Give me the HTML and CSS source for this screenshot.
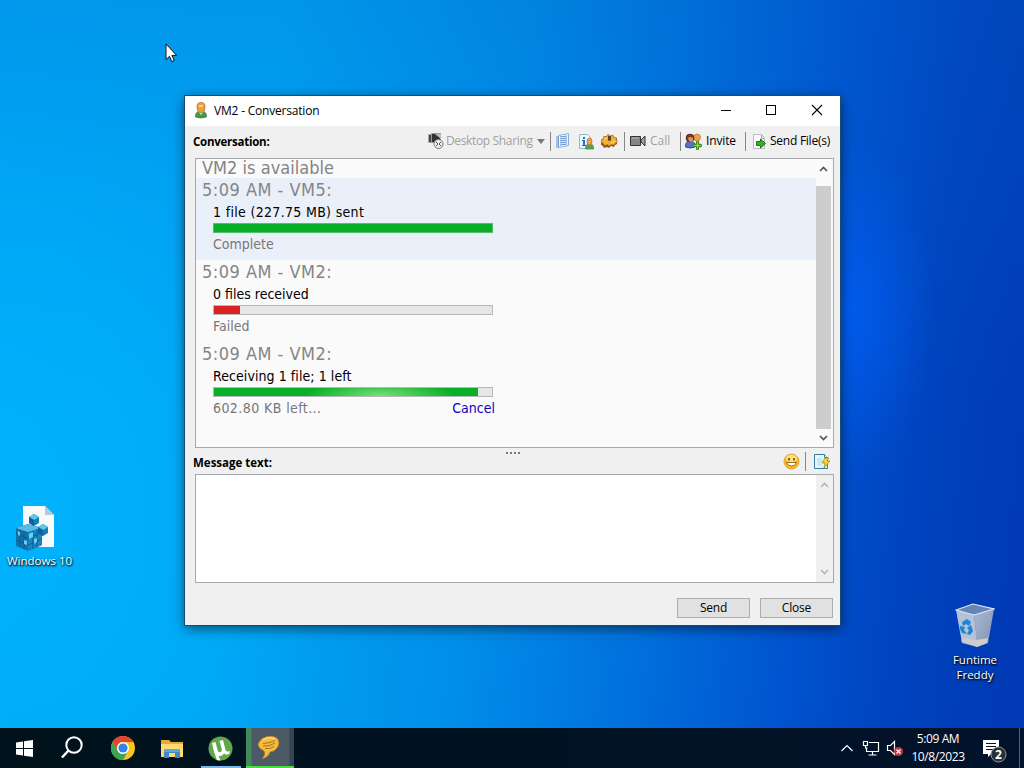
FILE: index.html
```html
<!DOCTYPE html>
<html lang="en">
<head>
<meta charset="utf-8">
<title>VM2 - Conversation</title>
<link rel="stylesheet" href="styles.css">
</head>
<body>
<main class="desktop">
  <svg class="cursor" width="13" height="20" viewBox="0 0 13 20"><path d="M1 1v15.500l3.500-3.200 2.300 5.300 2.400-1-2.300-5.200h4.800z" fill="#fff" stroke="#111"/></svg>

  <div class="shortcut shortcut-reg">
    <svg width="42" height="46" viewBox="0 0 42 46">
      <path d="M8 1h22l9 9v32H8z" fill="#f7f9fb"/><path d="M30 1l9 9h-9z" fill="#b9c9d4"/>
      <path d="M1 23l12-4 14 4v17l-14 6-12-5z" fill="#1173ae"/>
      <path d="M1 23l12-4 14 4-14 4z" fill="#58bbe5"/>
      <path d="M13 27v19l14-6V23z" fill="#1787c4"/>
      <path d="M5 25v17M9 26v18M1 29l12 4 14-5M1 35l12 5 14-6M18 26v18M22 24v18" stroke="#0b5588" fill="none" stroke-width=".8"/>
      <path d="M14 29l4-2v5l-4 2zM19 34l3-1v4l-3 2zM3 26l2 1v4l-2-1zM9 35l3 1v4l-3-1z" fill="#70cbec"/>
      <path d="M14 12l5-3 5 3v6l-5 3-5-3z" fill="#167db7"/><path d="M14 12l5-3 5 3-5 3z" fill="#65c5e8"/><path d="M19 15v6l-5-3v-6z" fill="#0c649c"/>
      <path d="M23 22l5-3 5 3v6l-5 3-5-3z" fill="#167db7"/><path d="M23 22l5-3 5 3-5 3z" fill="#65c5e8"/><path d="M28 25v6l-5-3v-6z" fill="#0c649c"/>
    </svg>
    <span class="reg-label">Windows 10</span>
  </div>

  <div class="shortcut shortcut-bin">
    <svg width="40" height="46" viewBox="0 0 40 46">
      <defs><linearGradient id="bin" x2="1" y2="1"><stop stop-color="#a9b9d4"/><stop offset="1" stop-color="#8291b1"/></linearGradient></defs>
      <path d="M1 7l18 4 4 33-16-4z" fill="#b4c1d8"/><path d="M19 11l20-5-6 34-11 4z" fill="url(#bin)"/>
      <path d="M1 7l17-6 21 5-20 6z" fill="#6684b4" stroke="#dce9fa" stroke-width="1.2"/>
      <path d="M6 38l2-3 13 2 12-2-1 5-10 4z" fill="#d0cbcd"/>
      <g fill="#1688d4"><path d="M7 19l5-3 4 3-2 4-3-2-3 2z"/><path d="M16 22l2 6-3 4-3-1 2-4-2-2z"/><path d="M5 23l5 1-1 3 3 4-5-1-2-4z"/></g>
    </svg>
    <span>Funtime</span><span>Freddy</span>
  </div>

  <section class="window">
    <header class="titlebar">
      <svg class="person" width="14" height="17" viewBox="0 0 14 17"><path d="M1.500 15c0-5 2-5.500 5.500-5.500s5.500.5 5.500 5.500q-5.500 2-11 0" fill="#3b9d49" stroke="#4d6d43" stroke-width=".7"/><path d="M4.500 10l2.500 3 2.500-3" fill="#e9f4df"/><path d="M3 4c0-5 8-5 8 0 0 4-1 7-4 7S3 8 3 4" fill="#e9a03d" stroke="#a96a2b" stroke-width=".7"/><path d="M5 4h4" stroke="#ffd17b" stroke-width="2"/></svg>
      <h1>VM2 - Conversation</h1>
      <svg class="controls" width="138" height="30" viewBox="0 0 138 30" fill="none" stroke="#000" shape-rendering="crispEdges"><path d="M19 14.500h10M64.500 9.500h9v9h-9z"/><path d="M110 9l10 10M120 9l-10 10" shape-rendering="auto" stroke-width="1.1"/></svg>
    </header>

    <div class="toolbar">
      <strong class="conv">Conversation:</strong>
      <svg class="ic-share" width="17" height="18" viewBox="0 0 17 18"><path d="M1.500 2.500h4v8h-4z" fill="#444" stroke="#aaa"/><path d="M4.500 1.500h9v9h-9z" fill="#333" stroke="#999"/><path d="M8 2h6v5z" fill="#bbb"/><circle cx="11.500" cy="12" r="4.500" fill="#eee" stroke="#777"/><path d="M9 10l2 2-2 2M14 10l-2 2 2 2" stroke="#555" fill="none"/></svg>
      <span class="off share-label">Desktop Sharing</span>
      <svg class="arrow" width="8" height="5" viewBox="0 0 8 5"><path d="M0 0h8L4 5z" fill="#777"/></svg>
      <i class="sep sep1"></i>
      <svg class="ic-notes" width="14" height="16" viewBox="0 0 14 16"><path d="M2.500 2.500l10-2v12l-10 2z" fill="#eef5ff" stroke="#8dadd8"/><path d="M4 4l7-1M4 6l7-1M4 8l7-1M4 10l7-1M4 12l7-1" stroke="#5f90d0"/><path d="M0 4h3M0 6h3M0 8h3M0 10h3M0 12h3M0 14h3" stroke="#6c91c8"/></svg>
      <svg class="ic-info" width="16" height="17" viewBox="0 0 16 17"><path d="M1.500 1.500h8l3 3v11h-11z" fill="#edf8ff" stroke="#94b7d0"/><path d="M5 4h2v2H5zM4 7h3v5h1v1H4v-1h1V8H4z" fill="#1f70c4"/><path d="M7.500 16c0-4 1-5 4-5s4 1 4 5z" fill="#49a959" stroke="#52743f" stroke-width=".7"/><ellipse cx="11.500" cy="8.500" rx="2.500" ry="3.500" fill="#eba34b" stroke="#b56a2d" stroke-width=".7"/></svg>
      <svg class="ic-gear" width="17" height="17" viewBox="0 0 17 17"><path d="M1 6l2-1V3h3l1-2 2 2 3-1 1 2 3 1v6l-2 1-1 2-3-1-2 2-2-1-3 1-1-2-3-2z" fill="#8b541a"/><path d="M.5 6.500l2-.5V3.500h3L7 1.500 9 3l2.500-1 1 2 3 1-.5 2 1.500 1.500-2.500 2-1 1.500-3-.5-1.500 1.500-2-1.500-3 1-1-2-2-1z" fill="#ecb137" stroke="#b77719" stroke-width=".7"/><path d="M7 3h3v4q-2 2-3 0z" fill="#61401b"/><path d="M3 6l3-1M10 10l4-2" stroke="#ffe277"/></svg>
      <i class="sep sep2"></i>
      <svg class="ic-call" width="17" height="12" viewBox="0 0 17 12"><path d="M.5 1.500h10v9H.5z" fill="#858585" stroke="#333"/><path d="M11 5l4-4v10l-4-4z" fill="#a2a2a2" stroke="#333"/><path d="M2 3h7" stroke="#bbb"/></svg>
      <span class="off call-label">Call</span>
      <i class="sep sep3"></i>
      <svg class="ic-invite" width="17" height="17" viewBox="0 0 17 17"><circle cx="12" cy="4.500" r="3.500" fill="#eca345" stroke="#b87032" stroke-width=".7"/><path d="M8 13c0-4 7-6 8-1v3z" fill="#efb75c"/><path d="M.5 14c0-5 2-6 4.500-6s5 1 5 6q-5 2-9.500 0" fill="#5275c8" stroke="#324991"/><circle cx="5" cy="5" r="4" fill="#7c392c" stroke="#552217" stroke-width=".7"/><path d="M3 5q2-2 5 0v3q-2 2-4 0z" fill="#d99364"/><path d="M11.500 8.500h2v3h3v2h-3v3h-2v-3h-3v-2h3z" fill="#8cdd35" stroke="#398821"/></svg>
      <span class="invite-label">Invite</span>
      <i class="sep sep4"></i>
      <svg class="ic-send" width="15" height="17" viewBox="0 0 15 17"><path d="M1.500 1.500h8l3 3v11h-11z" fill="#fafafa" stroke="#bbb"/><path d="M9.500 1.500v4h3" stroke="#aaa" fill="#ddd"/><path d="M4.500 8.500h4V6l5 4.500-5 4.500v-2.500h-4z" fill="#3eac31" stroke="#18741b"/></svg>
      <span class="send-label">Send File(s)</span>
    </div>

    <div class="chat">
      <div class="log">
        <p class="presence">VM2 is available</p>
        <article class="message own">
          <h2>5:09 AM - VM5:</h2><p class="file sent">1 file (227.75 MB) sent</p>
          <div class="bar done"><div class="fill full"></div></div><div class="status"><span>Complete</span></div>
        </article>
        <article class="message">
          <h2>5:09 AM - VM2:</h2><p class="file">0 files received</p>
          <div class="bar"><div class="fill failed"></div></div><div class="status"><span>Failed</span></div>
        </article>
        <article class="message">
          <h2>5:09 AM - VM2:</h2><p class="file receiving">Receiving 1 file; 1 left</p>
          <div class="bar"><div class="fill active"></div></div><div class="status"><span class="remain">602.80 KB left...</span><a>Cancel</a></div>
        </article>
      </div>
      <div class="scroll">
        <svg width="9" height="6" viewBox="0 0 9 6"><path d="M1 5l3.500-3.500L8 5"/></svg>
        <div class="thumb"></div>
        <svg width="9" height="6" viewBox="0 0 9 6"><path d="M1 1l3.500 3.500L8 1"/></svg>
      </div>
    </div>

    <div class="compose-head">
      <strong>Message text:</strong>
      <svg class="dots" width="14" height="2" viewBox="0 0 14 2"><path d="M0 1h14" stroke="#777" stroke-width="2" stroke-dasharray="2"/></svg>
      <svg class="smile" width="17" height="17" viewBox="0 0 17 17"><circle cx="8.500" cy="8.500" r="7.500" fill="#f6b91f" stroke="#d99526" stroke-width=".8"/><ellipse cx="8.500" cy="5.500" rx="5.500" ry="3.800" fill="#ffe275"/><path d="M6 5v2.500M11 5v2.500" stroke="#5c3e16" stroke-width="1.5"/><path d="M3.500 9.500h10q-1 3.500-5 3.500t-5-3.500" fill="#fff" stroke="#8d601c" stroke-width=".9"/></svg>
      <i class="sep head-sep"></i>
      <svg class="template" width="18" height="17" viewBox="0 0 18 17"><path d="M1.500 1.500h10l3 3v11h-13z" fill="#e1f7fb" stroke="#327e9e"/><path d="M11.500 1.500v3h3" fill="#fff" stroke="#327e9e"/><path d="M4 6h5M4 8h5M4 10h4M4 12h5" stroke="#acd8df"/><path d="M12 5h4l-2 3h3l-6 7 1-5H9z" fill="#f4d337" stroke="#a28a25" stroke-width=".8"/></svg>
    </div>
    <div class="compose"><div class="scroll light"><svg width="9" height="6" viewBox="0 0 9 6"><path d="M1 5l3.500-3.500L8 5"/></svg><svg width="9" height="6" viewBox="0 0 9 6"><path d="M1 1l3.500 3.500L8 1"/></svg></div></div>
    <footer><button>Send</button><button>Close</button></footer>
  </section>
</main>

<nav class="taskbar">
  <div class="task"><svg width="17" height="17" viewBox="0 0 17 17" fill="#fff"><path d="M0 2.500l7-1V8H0zM8 1.300L17 0v8H8zM0 9h7v6.500l-7-1zM8 9h9v8l-9-1.300z"/></svg></div>
  <div class="task search"><svg width="24" height="24" viewBox="0 0 24 24" fill="none" stroke="#fff" stroke-width="2"><circle cx="14" cy="9" r="7.700"/><path d="M8.500 14.500L2 21.500" stroke-width="2.500"/></svg></div>
  <div class="task"><svg width="24" height="24" viewBox="0 0 24 24"><circle cx="12" cy="12" r="12" fill="#f9c51f"/><path d="M1.600 6A12 12 0 0 1 22.400 6H12a6 6 0 0 0-5.200 9z" fill="#e44332"/><path d="M1.600 6l5.200 9a6 6 0 0 0 10.400 0L12 24A12 12 0 0 1 1.600 6" fill="#38a455"/><circle cx="12" cy="12" r="6" fill="#fff"/><circle cx="12" cy="12" r="4.600" fill="#3483e8"/></svg></div>
  <div class="task"><svg width="22" height="19" viewBox="0 0 22 19"><path d="M0 1h8l2 2h12v15H0z" fill="#e9a932"/><path d="M0 5h22v13H0z" fill="#ffda73"/><path d="M3 19v-9h16v9h-5v-5H8v5z" fill="#3c8ac7"/><path d="M3 10h16v3H3z" fill="#61a8d7"/></svg></div>
  <div class="task running"><svg width="25" height="25" viewBox="0 0 25 25"><circle cx="12.500" cy="12.500" r="12" fill="#64a64b"/><path d="M4 7l3.500-1 2 8q1 3 3 2t1-4l-2-7 3.500-1 2.500 10q.7 2 3 1.500l1.500-.5-1 3q-3 1.500-5-.5-1.500 3-5.500 2.500l2 4.500-3.500-.3Q5.500 16 4 7z" fill="#fff"/></svg></div>
  <div class="task selected"><svg width="24" height="24" viewBox="0 0 24 24"><path d="M5 2.500Q14-2 20 2q4 5 0 10-3 4-7 4-1 5-8 7 4-4 2-8Q-1 11 2 6z" fill="#f4bb3f" stroke="#a97020" stroke-width=".7"/><path d="M6 7.500q6 0 12-3M6 10q6 1 12-3M8 12.500q5 1 9-2" stroke="#a9701e" fill="none"/><path d="M6 4q6-4 12-1" stroke="#ffe897" fill="none"/></svg></div>
  <div class="tray">
    <svg width="64" height="20" viewBox="0 0 64 20" fill="none" stroke="#fff" stroke-width="1.200"><path d="M1.500 13L7 7.500l5.500 5.500"/><path d="M29 4.500h9.500v9H26.500V10M23.500 3.500h4v4h-4zM25.500 8v2h2M32.500 14v3M28.500 17h8"/><path d="M47.500 7.500h3l4-4v13l-4-4h-3z"/><circle cx="58.500" cy="13.500" r="4.500" fill="#cb3342" stroke="none"/><path d="M56.500 11.500l4 4M60.500 11.500l-4 4"/></svg>
    <time><span>5:09 AM</span><span>10/8/2023</span></time>
    <svg class="notice" width="25" height="25" viewBox="0 0 25 25"><path d="M1 2h16v14H9l-3 3v-3H1z" fill="#fff"/><path d="M4 5.500h10M4 8.500h10M4 11.500h7" stroke="#061327"/><circle cx="16.500" cy="16.500" r="7.500" fill="#292f39" stroke="#909598"/><text x="13" y="21">2</text></svg>
    <i class="peek"></i>
  </div>
</nav>
</body>
</html>
```
FILE: styles.css
```css
* { box-sizing: border-box; }
body { margin: 0; width: 1024px; height: 768px; overflow: hidden; font: 12px/16px "Open Sans", "Noto Sans", sans-serif; color: #000; }
h1, h2, p { margin: 0; font-weight: 400; }
svg { display: block; flex: none; }
.desktop {
  position: relative;
  height: 728px;
  padding: 96px 184px 0 185px;
  background:
    radial-gradient(ellipse 85px 170px at 850px 310px, #005ff8c0 0, #0060fa60 45%, #0060f000 100%),
    radial-gradient(ellipse 330px 420px at 0 520px, #00bcff90, #00bcff00),
    linear-gradient(180deg, #0060c038 0, #0070d018 25%, transparent 55%),
    linear-gradient(96deg, #00a8f8 0, #00a6f5 26%, #008eea 48%, #0070dc 64%, #0053d0 78%, #0043be 88%, #0039b3 100%);
}
.cursor { position: absolute; left: 165px; top: 43px; }
.shortcut { position: absolute; display: flex; flex-direction: column; align-items: center; color: #fff; font-size: 11.5px; line-height: 15px; text-shadow: 1px 1px 2px #000, 0 1px 2px #000a; }
.shortcut-reg { left: 3px; top: 505px; width: 73px; }
.shortcut-reg svg { margin-bottom: 2px; margin-right: 8px; }
.reg-label { white-space: nowrap; }
.shortcut-bin { left: 938px; top: 603px; width: 74px; }
.shortcut-bin svg { margin-bottom: 3px; }
.window { width: 655px; height: 529px; background: #f0f0f0; outline: 1px solid #164b72; box-shadow: 0 3px 12px #0009; display: flex; flex-direction: column; }
.titlebar { height: 30px; flex: none; background: #fff; display: flex; align-items: center; padding-left: 9px; }
.titlebar h1 { margin-left: 6px; font-size: 12px; letter-spacing: -.2px; flex: 1; }
.person { margin-top: -1px; }
.toolbar { height: 32px; flex: none; display: flex; align-items: center; padding: 0 9px 2px 8px; white-space: nowrap; }
strong { font-size: 11.5px; letter-spacing: -.25px; }
.conv { flex: 1; padding-top: 2px; }
.off { color: #a0a0a0; }
.share-label { margin-left: 2px; width: 88px; letter-spacing: -.35px; }
.arrow { margin-left: 3px; }
.sep { width: 1px; height: 19px; background: #858585; margin: 0 6px 0 5px; }
.sep1 { margin-right: 5px; }
.ic-info { margin-left: 8px; }
.ic-gear { margin-left: 7px; }
.sep2 { margin: 0 5px 0 6px; }
.call-label { margin-left: 3px; width: 21px; }
.sep3 { margin: 0 4px 0 9px; }
.invite-label { width: 30px; margin-left: 4px; letter-spacing: -.15px; }
.sep4 { margin: 0 6px 0 9px; }
.send-label { margin-left: 3px; width: 61px; letter-spacing: -.25px; }
.chat { margin: 0 6px 0 10px; height: 290px; flex: none; border: 1px solid #a5a9ad; display: flex; background: #fafafa; }
.log { flex: 1; font-family: "DejaVu Sans Condensed", "DejaVu Sans", sans-serif; }
.presence { height: 19px; padding-left: 6px; color: #858585; font-size: 18px; line-height: 18px; letter-spacing: .02px; }
.message { height: 82px; padding-left: 17px; }
.own { background: #eaf0f9; }
h2 { height: 23px; margin-left: -11px; color: #858585; font-size: 18px; line-height: 24px; letter-spacing: .48px; }
.file { height: 22px; font-size: 14px; line-height: 22px; }
.sent { letter-spacing: .32px; }
.receiving { letter-spacing: .07px; }
.bar { height: 10px; width: 280px; background: #e6e6e6; border: 1px solid #b8b8b8; }
.done { border-color: #5abc70; }
.fill { height: 8px; background: #08ae26; }
.full { width: 278px; }
.failed { width: 26px; background: #da2224; }
.active { width: 264px; background: radial-gradient(ellipse 75px 14px at 166px 7px, #78df78, #78df7800), #08ae26; }
.status { width: 282px; height: 22px; display: flex; justify-content: space-between; font-size: 14px; line-height: 23px; color: #777; }
.remain { letter-spacing: .42px; }
.status a { color: #1100bd; }
.scroll { width: 17px; display: flex; flex-direction: column; align-items: center; padding: 7px 0; }
.scroll svg { fill: none; stroke: #555; stroke-width: 1.7; }
.chat .scroll { padding: 7px 2px 6px 0; justify-content: space-between; }
.thumb { width: 15px; height: 243px; background: #cdcdcd; margin-top: 8px; }
.compose-head { height: 26px; flex: none; display: flex; padding: 2px 9px 0 8px; align-items: center; }
.compose-head strong { width: 313px; padding-top: 2px; letter-spacing: 0; }
.dots { align-self: flex-start; margin-top: 2px; }
.smile { margin: -2px 0 0 auto; }
.template { margin-top: -2px; }
.head-sep { margin: -2px 7px 0 5px; }
.compose { margin: 0 6px 0 10px; height: 109px; flex: none; border: 1px solid #a5a9ad; background: #fff; display: flex; justify-content: flex-end; }
.light { background: #f0f0f0; justify-content: space-between; }
.light svg { stroke: #b5b5b5; }
footer { display: flex; justify-content: flex-end; gap: 10px; padding: 15px 7px 0; }
button { width: 73px; height: 20px; padding: 0; border: 1px solid #adadad; background: #e1e1e1; color: #000; font: 12px/16px "Open Sans", sans-serif; letter-spacing: -.2px; }
.taskbar { height: 40px; display: flex; background: linear-gradient(90deg, #00121b, #001322 50%, #02122c); color: #fff; }
.task { width: 49px; height: 40px; display: flex; align-items: center; justify-content: center; }
.search { padding-right: 4px; }
.running { width: 50px; padding-right: 1px; background: linear-gradient(#76b9ed, #76b9ed) 5px 100% / 40px 2px no-repeat; }
.selected { width: 48px; padding-right: 2px; background: linear-gradient(90deg, #42895b 0 5px, #4c5a65 6px 43px, #374551 44px); box-shadow: inset 0 -2px #49dc45; }
.tray { margin-left: auto; width: 184px; display: flex; align-items: center; }
time { display: flex; flex-direction: column; align-items: center; width: 60px; margin-left: 4px; line-height: 18px; font-size: 12px; letter-spacing: -.4px; }
.notice { margin-left: 14px; margin-top: 5px; }
.notice text { fill: #fff; font: bold 12px "Open Sans", sans-serif; }
.peek { width: 1px; height: 40px; background: #526075; margin-left: auto; margin-right: 4px; }
```
